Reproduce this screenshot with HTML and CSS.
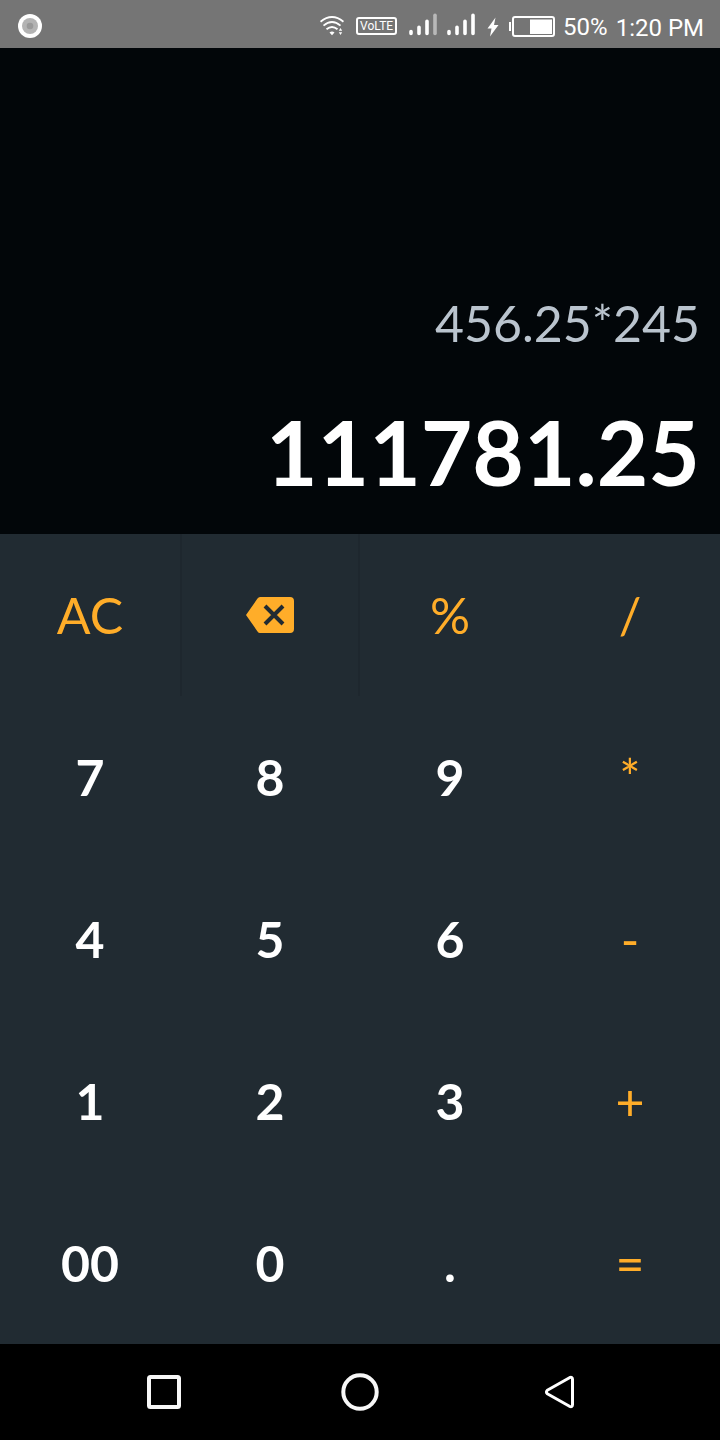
FILE: index.html
```html
<!DOCTYPE html>
<html lang="en">
<head>
<meta charset="utf-8">
<meta name="viewport" content="width=device-width, initial-scale=1">
<title>Calculator</title>
<link rel="stylesheet" href="styles.css">
</head>
<body>
<div class="app">
  <header class="status">
    <svg class="record" width="24" height="24" viewBox="0 0 24 24" aria-hidden="true"><circle cx="12" cy="12" r="12" fill="#fff"/><circle cx="12" cy="12" r="8" fill="#b3b3b3"/><circle cx="12" cy="12" r="3.3" fill="#999"/></svg>
    <svg width="24" height="20" viewBox="0 0 24 20" fill="none" stroke="#fff" stroke-width="1.8" aria-hidden="true"><path d="M.5 5.7Q12-3.700 23.500 5.700M3.500 9.600Q12 2.400 20.500 9.600M6.500 13.300Q12 8.600 17.500 13.300"/><path d="M9.500 16.500Q12 14.400 14.500 16.500L12 19.200Z" fill="#fff" stroke="none"/><path d="M18.800 14.800L20.500 12L22.200 14.800ZM18.800 16.200L20.500 19L22.200 16.200Z" fill="#fff" stroke="none"/></svg>
    <span class="volte">VoLTE</span>
    <span class="signals">
      <svg width="28" height="23" viewBox="0 0 28 23" stroke="#fff" stroke-width="3.600" stroke-linecap="round" aria-hidden="true"><path d="M2 18.500V20.500M10 14.300V20.500M18 8.300V20.500"/><path d="M26 2.300V20.500" stroke="#b8b8b8"/></svg>
      <svg width="28" height="23" viewBox="0 0 28 23" stroke="#fff" stroke-width="3.600" stroke-linecap="round" aria-hidden="true"><path d="M2 18.500V20.500M10 14.300V20.500M18 8.300V20.500M26 2.300V20.500"/></svg>
    </span>
    <span class="power">
      <svg width="14" height="20" viewBox="0 0 14 20" fill="#fff" aria-hidden="true"><path d="M8.500.5L.5 11.500H4.500L3 19.500L11.500 8H7Z"/></svg>
      <svg width="46" height="22" viewBox="0 0 46 22" aria-hidden="true"><path d="M0 6H2V15H0Z" fill="#fff"/><rect x="4" y="1" width="41" height="19" rx="2" fill="none" stroke="#fff" stroke-width="2"/><path d="M21 3.500H43V18H21Z" fill="#fff"/></svg>
      <span>50%</span>
      <time class="clock">1:20 PM</time>
    </span>
  </header>
  <main class="calculator">
    <section class="display" aria-label="Display">
      <div class="expression">456.25*245</div>
      <output class="result">111781.25</output>
    </section>
    <section class="keypad" aria-label="Keypad">
      <button class="key op">AC</button>
      <button class="key op divided" aria-label="Backspace"><svg width="48" height="36" viewBox="0 0 48 36" aria-hidden="true"><path d="M14 0H44Q48 0 48 4V32Q48 36 44 36H14Q12.500 36 11.500 34.500L0 18L11.500 1.500Q12.500 0 14 0Z" fill="#ffad29"/><path d="M19 9L37 27M37 9L19 27" stroke="#212b32" stroke-width="4"/></svg></button>
      <button class="key op">%</button>
      <button class="key op">/</button>
      <button class="key">7</button>
      <button class="key">8</button>
      <button class="key">9</button>
      <button class="key op">*</button>
      <button class="key">4</button>
      <button class="key">5</button>
      <button class="key">6</button>
      <button class="key op">-</button>
      <button class="key">1</button>
      <button class="key">2</button>
      <button class="key">3</button>
      <button class="key op">+</button>
      <button class="key">00</button>
      <button class="key">0</button>
      <button class="key">.</button>
      <button class="key op">=</button>
    </section>
  </main>
  <nav class="system-nav" aria-label="System">
    <button class="nav-button" aria-label="Recent apps"><svg width="40" height="40" viewBox="0 0 40 40" fill="none" stroke="#f7f7f7" stroke-width="4" aria-hidden="true"><rect x="5" y="5" width="30" height="30" rx="1.500"/></svg></button>
    <button class="nav-button" aria-label="Home"><svg width="40" height="40" viewBox="0 0 40 40" fill="none" stroke="#f7f7f7" stroke-width="4" aria-hidden="true"><circle cx="20" cy="20" r="16.700"/></svg></button>
    <button class="nav-button" aria-label="Back"><svg width="40" height="40" viewBox="-4 0 40 40" fill="none" stroke="#fff" stroke-width="3" stroke-linejoin="round" aria-hidden="true"><path d="M7.300 18.200L29.500 5.700Q32.500 4.500 32.500 7.500V32.500Q32.500 35.500 29.500 34.300L7.300 21.800Q5.500 20 7.300 18.200Z"/></svg></button>
  </nav>
</div>
</body>
</html>
```
FILE: styles.css
```css
* {
  box-sizing: border-box;
}

body {
  margin: 0;
  background: #000;
  font-family: Lato, sans-serif;
}

.app {
  display: grid;
  grid-template-rows: auto 1fr auto;
  min-height: 100vh;
}

.status {
  display: flex;
  align-items: center;
  gap: 12px;
  height: 48px;
  padding: 4px 16px 0 18px;
  background: #757575;
  color: #fff;
  font: 24px/28px Roboto, sans-serif;
}

.record {
  margin-right: auto;
}

.volte {
  width: 41px;
  height: 18px;
  border: 2px solid #fff;
  border-radius: 3px;
  font: 12px/15px Roboto, sans-serif;
  text-align: center;
}

.signals,
.power {
  display: flex;
  align-items: center;
}

.signals {
  gap: 10px;
  padding-bottom: 4px;
}

.power {
  gap: 8px;
  padding-top: 2px;
}

.clock {
  padding-top: 2px;
}

.calculator {
  display: grid;
  grid-template-rows: 3fr 5fr;
}

.display {
  display: flex;
  flex-direction: column;
  justify-content: flex-end;
  gap: 45px;
  padding: 28px 20px;
  background: #020609;
  text-align: right;
}

.expression {
  color: #bac4ce;
  font-size: 50px;
  line-height: 60px;
}

.result {
  color: #fff;
  font-size: 89px;
  font-weight: 700;
  line-height: 108px;
}

.keypad {
  display: grid;
  grid-template-columns: repeat(4, 1fr);
  grid-template-rows: repeat(5, 1fr);
  background: #212b32;
}

.key {
  display: flex;
  align-items: center;
  justify-content: center;
  padding: 0;
  border: 0;
  background: none;
  color: #fff;
  font: 700 50px/60px Lato, sans-serif;
}

.op {
  color: #ffad29;
  font-weight: 400;
}

.divided {
  border: solid #1e272e;
  border-width: 0 2px;
}

.system-nav {
  display: flex;
  align-items: center;
  justify-content: center;
  gap: 156px;
  height: 96px;
  background: #000;
}

.nav-button {
  display: flex;
  padding: 0;
  border: 0;
  background: none;
}
```
